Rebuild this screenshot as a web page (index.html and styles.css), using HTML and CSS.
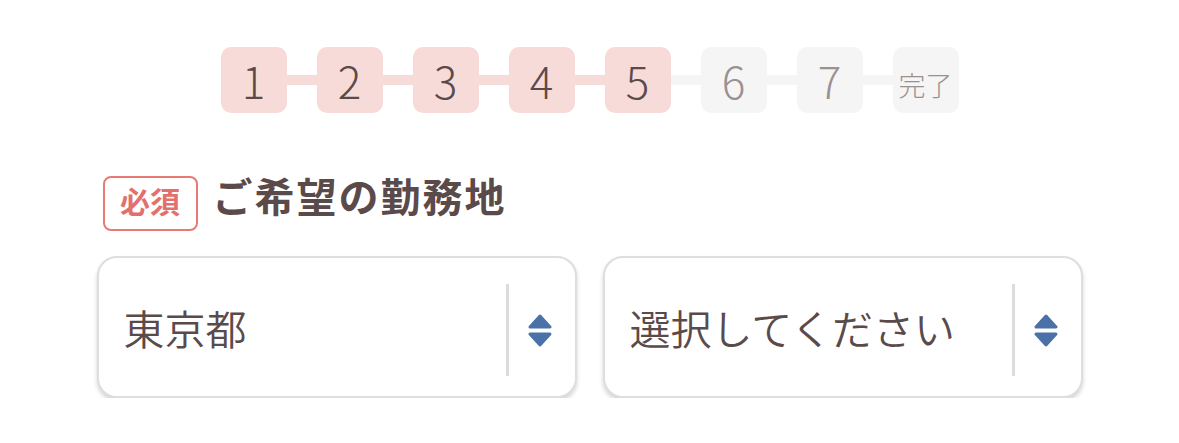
FILE: index.html
```html
<!DOCTYPE html>
<html lang="ja">
<head>
<meta charset="utf-8">
<link rel="stylesheet" href="styles.css">
</head>
<body>
<main class="page">
  <ol class="steps">
    <li class="step is-done">1</li>
    <li class="link is-done"></li>
    <li class="step is-done">2</li>
    <li class="link is-done"></li>
    <li class="step is-done">3</li>
    <li class="link is-done"></li>
    <li class="step is-done">4</li>
    <li class="link is-done"></li>
    <li class="step is-done">5</li>
    <li class="link"></li>
    <li class="step">6</li>
    <li class="link"></li>
    <li class="step">7</li>
    <li class="link"></li>
    <li class="step step-end">完了</li>
  </ol>

  <div class="field-label">
    <span class="badge">必須</span>
    <h2 class="field-title">ご希望の勤務地</h2>
  </div>

  <div class="selects">
    <div class="select">
      <span class="select-value">東京都</span>
      <span class="select-divider"></span>
      <svg class="select-arrow" viewBox="0 0 24 33" aria-hidden="true">
        <path d="M12 2 L22 13 L2 13 Z" />
        <path d="M2 20 L22 20 L12 31 Z" />
      </svg>
    </div>
    <div class="select">
      <span class="select-value">選択してください</span>
      <span class="select-divider"></span>
      <svg class="select-arrow" viewBox="0 0 24 33" aria-hidden="true">
        <path d="M12 2 L22 13 L2 13 Z" />
        <path d="M2 20 L22 20 L12 31 Z" />
      </svg>
    </div>
  </div>
</main>
</body>
</html>
```

FILE: styles.css
```css
* { box-sizing: border-box; }

html, body {
  margin: 0;
  padding: 0;
  background: #ffffff;
}

body {
  font-family: "Noto Sans CJK JP", "Noto Sans", sans-serif;
  color: #5b4a4a;
}

.page {
  width: 986px;
  margin: 0 auto;
  padding-top: 47px;
}

.steps {
  list-style: none;
  margin: 0;
  padding: 0;
  display: flex;
  justify-content: center;
  align-items: center;
}

.step {
  width: 66px;
  height: 66px;
  border-radius: 10px;
  background: #f5f5f5;
  color: #9b9191;
  font-size: 44px;
  font-weight: 300;
  line-height: 1;
  display: flex;
  align-items: center;
  justify-content: center;
}

.step.is-done {
  background: #f7dbd8;
  color: #5b4a4a;
}

.step-end {
  font-size: 27px;
  padding-top: 8px;
}

.link {
  width: 30px;
  height: 10px;
  background: #f5f5f5;
}

.link.is-done {
  background: #f7dbd8;
}

.field-label {
  display: flex;
  align-items: center;
  gap: 15px;
  margin-top: 62px;
  padding-left: 6px;
}

.badge {
  display: inline-flex;
  align-items: center;
  justify-content: center;
  width: 95px;
  height: 55px;
  padding-bottom: 6px;
  border: 2.5px solid #e87a76;
  border-radius: 8px;
  color: #e3706c;
  font-size: 30px;
  font-weight: 700;
  line-height: 1;
}

.field-title {
  margin: 0 0 16px;
  font-size: 40px;
  font-weight: 700;
  letter-spacing: 2px;
  line-height: 1;
  color: #5b4a4a;
}

.selects {
  display: flex;
  gap: 26px;
  margin-top: 25px;
}

.select {
  flex: 1;
  height: 142px;
  border: 2px solid #dedede;
  border-radius: 20px;
  box-shadow: 0 3px 4px rgba(0, 0, 0, 0.17);
  background: #ffffff;
  display: flex;
  align-items: center;
  padding: 0 23px 0 25px;
}

.select-value {
  flex: 1;
  font-size: 41px;
  font-weight: 350;
  color: #5b4a4a;
  line-height: 1;
}

.select-divider {
  width: 3px;
  height: 92px;
  background: #dcdcdc;
  margin-top: 6px;
  margin-right: 19px;
}

.select-arrow {
  width: 24px;
  height: 33px;
  margin-top: 6px;
  fill: #4a72a8;
  stroke: #4a72a8;
  stroke-width: 3;
  stroke-linejoin: round;
}
```
